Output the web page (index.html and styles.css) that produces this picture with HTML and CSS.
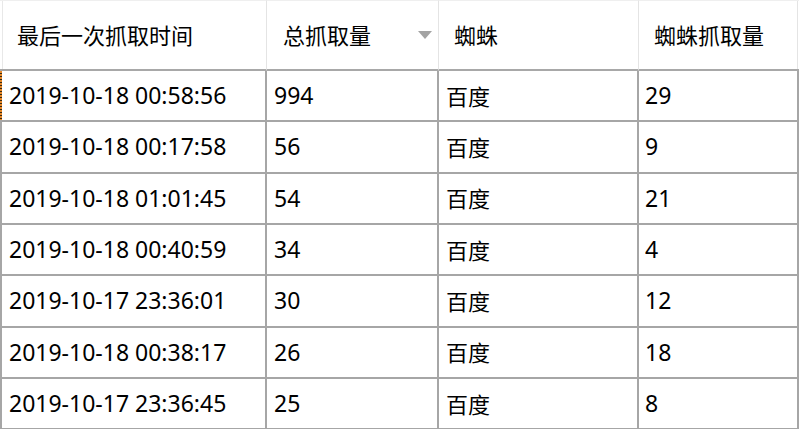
FILE: index.html
```html
<!DOCTYPE html>
<html lang="zh">
<head>
<meta charset="utf-8">
<title>抓取统计</title>
<link rel="stylesheet" href="styles.css">
</head>
<body>
<div class="grid">
  <div class="hcell c1 first">最后一次抓取时间</div>
  <div class="hcell c2 sorted"><span>总抓取量</span><span class="arrow"></span></div>
  <div class="hcell c3">蜘蛛</div>
  <div class="hcell c4">蜘蛛抓取量</div>

  <div class="cell c1 num focus">2019-10-18 00:58:56</div><div class="cell c2 num">994</div><div class="cell c3">百度</div><div class="cell c4 num">29</div>
  <div class="cell c1 num">2019-10-18 00:17:58</div><div class="cell c2 num">56</div><div class="cell c3">百度</div><div class="cell c4 num">9</div>
  <div class="cell c1 num">2019-10-18 01:01:45</div><div class="cell c2 num">54</div><div class="cell c3">百度</div><div class="cell c4 num">21</div>
  <div class="cell c1 num">2019-10-18 00:40:59</div><div class="cell c2 num">34</div><div class="cell c3">百度</div><div class="cell c4 num">4</div>
  <div class="cell c1 num">2019-10-17 23:36:01</div><div class="cell c2 num">30</div><div class="cell c3">百度</div><div class="cell c4 num">12</div>
  <div class="cell c1 num">2019-10-18 00:38:17</div><div class="cell c2 num">26</div><div class="cell c3">百度</div><div class="cell c4 num">18</div>
  <div class="cell c1 num">2019-10-17 23:36:45</div><div class="cell c2 num">25</div><div class="cell c3">百度</div><div class="cell c4 num">8</div>
</div>
</body>
</html>
```
FILE: styles.css
```css
html, body {
  margin: 0;
  padding: 0;
  background: #ffffff;
  overflow: hidden;
}
body {
  width: 799px;
  height: 429px;
  font-family: "Noto Sans", "Noto Sans CJK SC", sans-serif;
  font-size: 22px;
  color: #000;
}
.grid {
  display: grid;
  grid-template-columns: 267px 172px 200px 160px;
  grid-template-rows: 71px repeat(7, 51.33px);
}
.hcell {
  box-sizing: border-box;
  border-top: 1px solid #efefef;
  border-bottom: 2px solid #a8a8a8;
  border-right: 1px solid #e4e4e4;
  display: flex;
  align-items: center;
  padding-left: 15px;
  white-space: nowrap;
  line-height: 1;
}
.hcell.first {
  padding-left: 17px;
  background: linear-gradient(to right, transparent 2px, #e8e8e8 2px, #e8e8e8 3px, transparent 3px);
}
.hcell.c2 {
  padding-left: 16px;
  padding-right: 6px;
  justify-content: space-between;
}
.hcell.c4 {
  border-right: none;
  background: linear-gradient(to left, transparent 1px, #e4e4e4 1px, #e4e4e4 2px, transparent 2px);
}
.arrow {
  width: 0;
  height: 0;
  border-left: 7.5px solid transparent;
  border-right: 7.5px solid transparent;
  border-top: 8px solid #a3a3a3;
}
.cell {
  box-sizing: border-box;
  border-right: 2px solid #a6a6a6;
  border-bottom: 2px solid #a6a6a6;
  display: flex;
  align-items: center;
  padding-left: 7px;
  white-space: nowrap;
  line-height: 1;
}
.cell.num {
  font-size: 23px;
}
.cell.c1 {
  border-left: 2px solid #a6a6a6;
  padding-left: 7px;
}
.cell.focus {
  border-left: none;
  padding-left: 9px;
  background: repeating-linear-gradient(to bottom, #e8892a 0, #e8892a 2px, #3a2a10 2px, #3a2a10 3px) left top / 2px 100% no-repeat;
}
.cell.c4 {
  padding-left: 6px;
}
```
